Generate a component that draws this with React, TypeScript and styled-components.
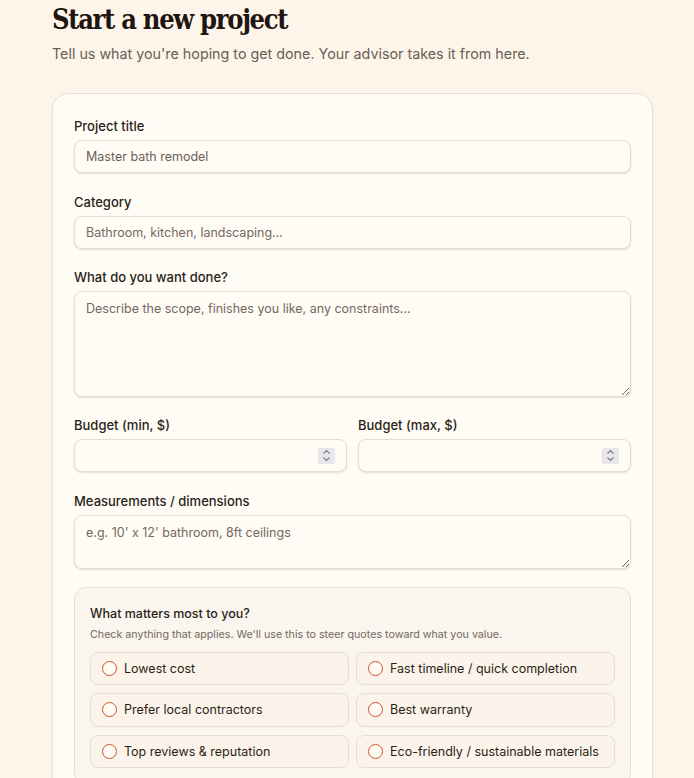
import styled, { createGlobalStyle } from "styled-components";

const GlobalStyle = createGlobalStyle`
  body {
    margin: 0;
    background-color: #fdf5ea;
    font-family: Inter, "Noto Sans", sans-serif;
    color: #2a1f18;
  }
`;

const priorities = [
  "Lowest cost",
  "Fast timeline / quick completion",
  "Prefer local contractors",
  "Best warranty",
  "Top reviews & reputation",
  "Eco-friendly / sustainable materials",
];

const Field = ({ label, children }: { label: string; children: React.ReactNode }) => (
  <StyledField>
    <StyledLabel>{label}</StyledLabel>
    {children}
  </StyledField>
);

// number box with the little stepper drawn on the right
const NumberInput = () => (
  <StyledNumberBox>
    <StyledNumberInput type="number" />
    <StyledStepper>
      <svg width="9" height="13" viewBox="0 0 9 13" fill="none">
        <path d="M1.5 4.5 L4.5 1.5 L7.5 4.5" stroke="#7b7682" strokeWidth="1.1" />
        <path d="M1.5 8.5 L4.5 11.5 L7.5 8.5" stroke="#7b7682" strokeWidth="1.1" />
      </svg>
    </StyledStepper>
  </StyledNumberBox>
);

export default function App() {
  return (
    <>
      <GlobalStyle />
      <StyledPage>
        <StyledTitle>Start a new project</StyledTitle>
        <StyledSubtitle>
          Tell us what you're hoping to get done. Your advisor takes it from here.
        </StyledSubtitle>

        <StyledCard>
          <Field label="Project title">
            <StyledInput type="text" defaultValue="Master bath remodel" />
          </Field>

          <Field label="Category">
            <StyledInput type="text" placeholder="Bathroom, kitchen, landscaping..." />
          </Field>

          <Field label="What do you want done?">
            <StyledTextarea
              $height={105.5}
              placeholder="Describe the scope, finishes you like, any constraints..."
            />
          </Field>

          <StyledTwoColumns>
            <Field label="Budget (min, $)">
              <NumberInput />
            </Field>
            <Field label="Budget (max, $)">
              <NumberInput />
            </Field>
          </StyledTwoColumns>

          <Field label="Measurements / dimensions">
            <StyledTextarea $height={54} placeholder="e.g. 10' x 12' bathroom, 8ft ceilings" />
          </Field>

          <StyledPriorities>
            <StyledPrioritiesTitle>What matters most to you?</StyledPrioritiesTitle>
            <StyledPrioritiesHint>
              Check anything that applies. We'll use this to steer quotes toward what you value.
            </StyledPrioritiesHint>
            <StyledOptionGrid>
              {priorities.map((item) => (
                <StyledOption key={item}>
                  <StyledCheck type="checkbox" />
                  {item}
                </StyledOption>
              ))}
            </StyledOptionGrid>
          </StyledPriorities>
        </StyledCard>
      </StyledPage>
    </>
  );
}

const StyledPage = styled.main`
  padding: 3px 0 40px 52px;
  width: 601px;
`;

const StyledTitle = styled.h1`
  margin: 0;
  font-family: "DejaVu Serif Condensed", "DejaVu Serif", serif;
  font-stretch: condensed;
  font-size: 27px;
  font-weight: 700;
  line-height: 34px;
  letter-spacing: -1.3px;
  color: #1f1611;
`;

const StyledSubtitle = styled.p`
  margin: 6px 0 0;
  font-size: 14.3px;
  line-height: 22px;
  color: #6b5d53;
`;

const StyledCard = styled.section`
  margin-top: 28px;
  background-color: #fffcf5;
  border: 1px solid #e9dfd2;
  border-radius: 16px;
  box-shadow: 0 1px 3px rgba(80, 50, 20, 0.06);
  padding: 24px 21px 30px;
  display: flex;
  flex-direction: column;
  gap: 20.5px;
`;

const StyledField = styled.label`
  display: flex;
  flex-direction: column;
  gap: 6px;
  min-width: 0;
`;

const StyledLabel = styled.span`
  font-size: 13px;
  font-weight: 500;
  line-height: 16px;
  color: #2a1f18;
`;

const StyledInput = styled.input`
  box-sizing: border-box;
  width: 100%;
  height: 33px;
  padding: 0 11px;
  font-family: Inter, "Noto Sans", sans-serif;
  font-size: 12.5px;
  color: #6b5f57;
  background-color: #fffcf5;
  border: 1px solid #e6dccf;
  border-radius: 8px;
  box-shadow: 0 1px 2px rgba(80, 50, 20, 0.14);
  outline: none;

  &::placeholder {
    color: #74685f;
  }
`;

const StyledNumberBox = styled.div`
  box-sizing: border-box;
  height: 33px;
  display: flex;
  align-items: center;
  padding: 0 11px 0 11px;
  background-color: #fffcf5;
  border: 1px solid #e6dccf;
  border-radius: 8px;
  box-shadow: 0 1px 2px rgba(80, 50, 20, 0.14);
`;

const StyledNumberInput = styled.input`
  flex: 1;
  min-width: 0;
  padding: 0;
  border: 0;
  outline: none;
  background: transparent;
  font-family: Inter, "Noto Sans", sans-serif;
  font-size: 12.5px;
  color: #6b5f57;
  appearance: textfield;

  &::-webkit-inner-spin-button,
  &::-webkit-outer-spin-button {
    -webkit-appearance: none;
    margin: 0;
  }
`;

const StyledStepper = styled.span`
  width: 17px;
  height: 16px;
  display: grid;
  place-items: center;
  background-color: #e9e7ee;
  border-radius: 2px;
`;

const StyledTextarea = styled.textarea<{ $height: number }>`
  box-sizing: border-box;
  width: 100%;
  height: ${(props) => props.$height}px;
  padding: 8px 11px;
  font-family: Inter, "Noto Sans", sans-serif;
  font-size: 12.5px;
  line-height: 17px;
  color: #6b5f57;
  background-color: #fffcf5;
  border: 1px solid #e6dccf;
  border-radius: 8px;
  box-shadow: 0 1px 2px rgba(80, 50, 20, 0.14);
  outline: none;
  resize: vertical;

  &::placeholder {
    color: #74685f;
  }
`;

const StyledTwoColumns = styled.div`
  display: grid;
  grid-template-columns: 1fr 1fr;
  column-gap: 11px;
`;

const StyledPriorities = styled.div`
  margin-top: -2.5px;
  background-color: #faf5ee;
  border: 1px solid #e8ded2;
  border-radius: 12px;
  padding: 15px 15px 16px;
`;

const StyledPrioritiesTitle = styled.h3`
  margin: 2px 0 0;
  font-size: 12.5px;
  font-weight: 500;
  line-height: 18px;
  color: #2a1f18;
`;

const StyledPrioritiesHint = styled.p`
  margin: 4px 0 0;
  font-size: 10.7px;
  line-height: 16px;
  color: #74685f;
`;

const StyledOptionGrid = styled.div`
  margin-top: 9px;
  display: grid;
  grid-template-columns: 1fr 1fr;
  gap: 8px 7px;
`;

const StyledOption = styled.label`
  box-sizing: border-box;
  height: 33.5px;
  display: flex;
  align-items: center;
  gap: 7px;
  padding: 0 11px;
  background-color: #fcf4ea;
  border: 1px solid #e9ddd0;
  border-radius: 8px;
  font-size: 12.5px;
  white-space: nowrap;
  color: #2a1f18;
`;

const StyledCheck = styled.input`
  appearance: none;
  margin: 0;
  width: 15px;
  height: 15px;
  flex-shrink: 0;
  border: 1.5px solid #c9532f;
  border-radius: 50%;
  background-color: #fffcf5;
`;
